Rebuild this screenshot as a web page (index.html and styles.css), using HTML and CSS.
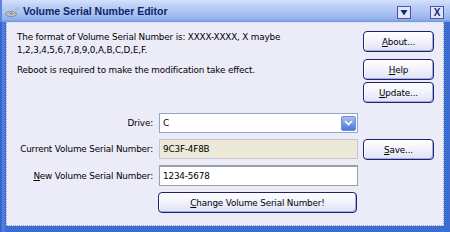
FILE: index.html
```html
<!DOCTYPE html>
<html lang="en">
<head>
  <meta charset="UTF-8">
  <title>Volume Serial Number Editor</title>
  <link rel="stylesheet" href="styles.css">
</head>
<body>
  <div class="window">
    <div class="titlebar">
      <svg class="app-icon" width="14" height="12" viewBox="0 0 14 12">
        <ellipse cx="6" cy="8" rx="5.5" ry="2.6" fill="#b9bfcb" stroke="#7c8494" stroke-width="0.8"/>
        <ellipse cx="6" cy="7.6" rx="1.5" ry="0.7" fill="#6e7687"/>
        <path d="M7 7 L12.5 1.5 L13.5 2.5 L8 8 Z" fill="#e8e8e8" stroke="#777" stroke-width="0.6"/>
      </svg>
      <span class="title">Volume Serial Number Editor</span>
      <span class="tb-btn">
        <svg width="8" height="7" viewBox="0 0 8 7"><path d="M0.5 1 H7.5 L4 6.5 Z" fill="#0c2a78"/></svg>
      </span>
      <span class="tb-btn close">X</span>
    </div>
    <div class="frame">
      <div class="client">
        <div class="top">
          <div class="info">
            <p>The format of Volume Serial Number is: XXXX-XXXX, X maybe<br>1,2,3,4,5,6,7,8,9,0,A,B,C,D,E,F.</p>
            <p class="note">Reboot is required to make the modification take effect.</p>
          </div>
          <div class="side">
            <button class="btn"><u>A</u>bout...</button>
            <button class="btn help"><u>H</u>elp</button>
            <button class="btn update"><u>U</u>pdate...</button>
          </div>
        </div>
        <div class="form">
          <label class="lbl"><span>Drive:</span></label>
          <div class="field combo">
            <span>C</span>
            <span class="drop">
              <svg width="9" height="6" viewBox="0 0 9 6"><path d="M1 1 L4.5 4.5 L8 1" fill="none" stroke="#fff" stroke-width="1.6"/></svg>
            </span>
          </div>
          <span></span>

          <label class="lbl"><span>Current Volume Serial Number:</span></label>
          <div class="field readonly">9C3F-4F8B</div>
          <button class="btn"><u>S</u>ave...</button>

          <label class="lbl"><span><u>N</u>ew Volume Serial Number:</span></label>
          <div class="field edit">1234-5678</div>
          <span></span>

          <span></span>
          <button class="btn wide"><u>C</u>hange Volume Serial Number!</button>
          <span></span>
        </div>
      </div>
    </div>
  </div>
</body>
</html>
```

FILE: styles.css
```css
body {
  margin: 0;
  padding: 0;
  font-family: "DejaVu Sans", Verdana, sans-serif;
  font-size: 8.8px;
  letter-spacing: -0.15px;
  color: #000;
}
.window {
  width: 450px;
  height: 232px;
  display: flex;
  flex-direction: column;
  background: #3f6fd0;
}
.titlebar {
  height: 22px;
  display: flex;
  align-items: center;
  padding: 0 5px 0 3px;
  background: linear-gradient(#d4e1fb, #bed1f7 25%, #a9c2f2 60%, #8fb0ec 90%, #6d93e0);
  border-left: 2px solid #5c86dc;
}
.app-icon {
  margin-right: 4px;
  margin-top: 2px;
}
.title {
  flex: 1;
  font-family: "Liberation Sans", Arial, sans-serif;
  font-weight: bold;
  font-size: 10.5px;
  letter-spacing: 0;
  color: #0c2569;
}
.tb-btn {
  width: 12px;
  height: 11px;
  border: 1px solid #5a4c9e;
  background: #dfe7fb;
  display: flex;
  align-items: center;
  justify-content: center;
  margin-left: 19px;
  margin-top: 2px;
}
.tb-btn.close {
  font-family: "Liberation Sans", Arial, sans-serif;
  font-weight: bold;
  font-size: 10px;
  letter-spacing: 0;
  color: #0c2a78;
  margin-right: 1px;
}
.frame {
  flex: 1;
  display: flex;
  padding: 0 6px 6px 6px;
  background: linear-gradient(90deg, #2a5bc4, #5684dc 3px, #3d6dd0 6px);
}
.client {
  flex: 1;
  background: #ececf8;
  border: 1px dotted #8ea6d6;
  border-top: 1px solid #dfe6f8;
  padding: 8px 9px 0 10px;
}
.top {
  display: flex;
  height: 73px;
}
.info {
  flex: 1;
}
.info p {
  margin: 0;
  line-height: 13px;
}
.info .note {
  margin-top: 7px;
}
.side {
  width: 71px;
  display: flex;
  flex-direction: column;
}
.btn {
  height: 21px;
  padding: 0;
  font-family: inherit;
  font-size: 8.8px;
  letter-spacing: inherit;
  color: #000;
  background: linear-gradient(#ffffff, #f3f3fc 45%, #dfe2f6);
  border: 1px solid #1e2270;
  border-radius: 4px;
  box-shadow: inset -1px -1px 0 #a7acde, inset 1px 1px 0 #ffffff;
  cursor: pointer;
}
.btn.help {
  margin-top: 7px;
}
.btn.update {
  margin-top: 2px;
}
.form {
  display: grid;
  grid-template-columns: 135px 199px 70px;
  grid-template-rows: 20px 20px 21px 21px;
  column-gap: 6px;
  row-gap: 6px;
  margin-top: 9px;
  margin-left: 1px;
}
.form .btn {
  margin-left: -1px;
}
.lbl {
  display: flex;
  justify-content: flex-end;
  align-items: center;
  white-space: nowrap;
  color: #000;
}
.field {
  border: 1px solid #8fa6c8;
  background: #fff;
  display: flex;
  align-items: center;
  padding-left: 3px;
}
.combo {
  justify-content: space-between;
  padding-right: 1px;
}
.drop {
  width: 15px;
  height: 15px;
  border-radius: 2px;
  background: linear-gradient(#a9c0f3, #7596e3 55%, #4f74d6);
  border: 1px solid #6d8ed8;
  box-sizing: border-box;
  display: flex;
  align-items: center;
  justify-content: center;
}
.readonly {
  background: #ece9d8;
  border-color: #c3c7cf;
}
.edit {
  border-top: 2px solid #8a8a8a;
  border-color: #9aa0a8;
}
.wide {
  width: 199px;
}
```
